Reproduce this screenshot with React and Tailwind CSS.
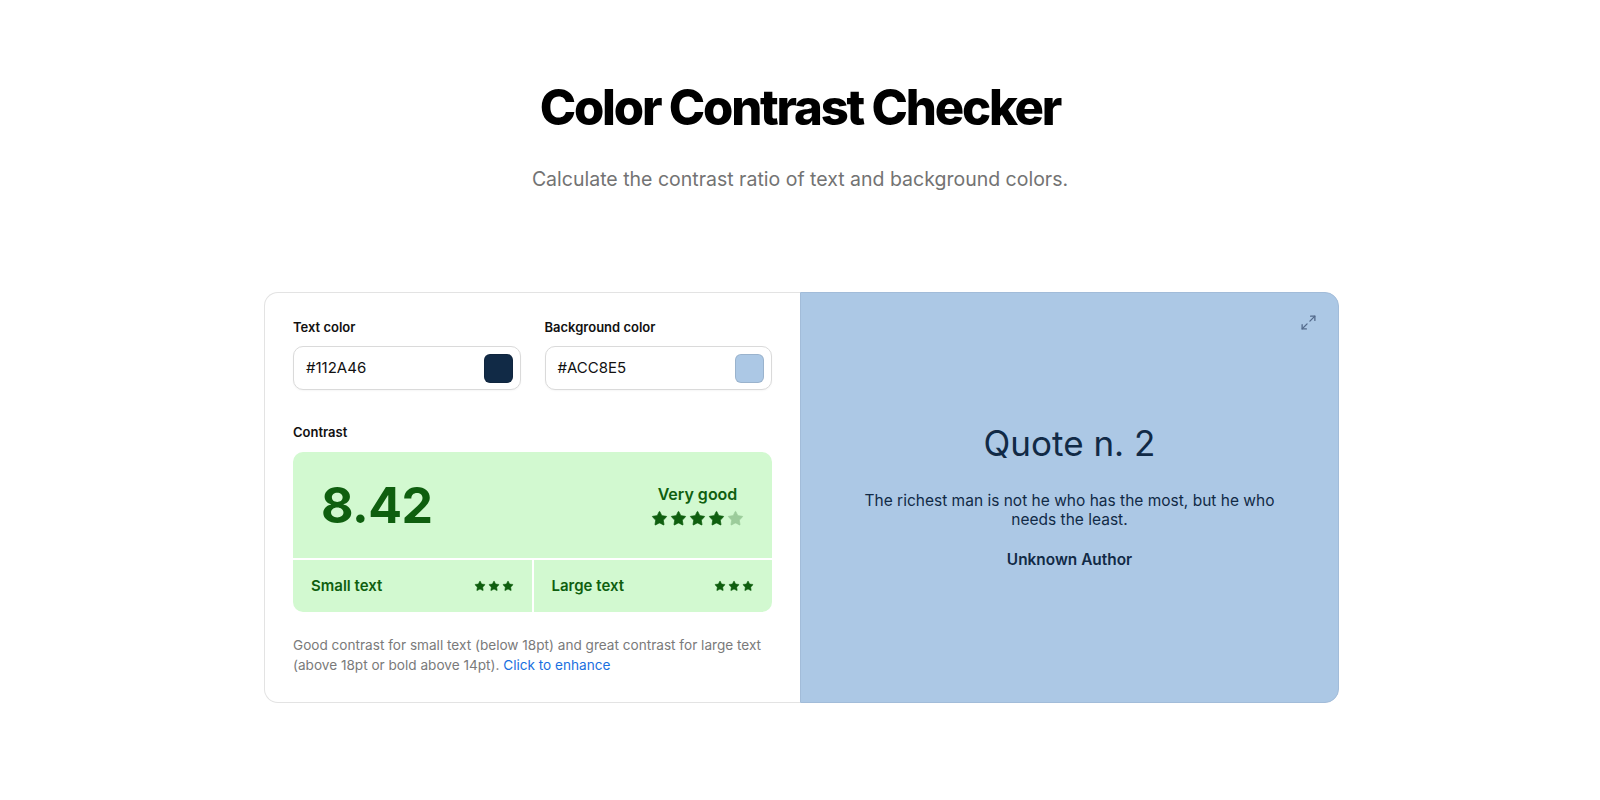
import React from 'react';
import { Star, Maximize2 } from 'lucide-react';

const GREEN = '#0f5f0f';

// row of filled stars, the rest faded
const Stars = ({ count, filled, size, gap }) => (
  <div className="flex items-center" style={{ gap }}>
    {Array.from({ length: count }).map((_, i) => (
      <Star
        key={i}
        size={size}
        strokeWidth={1}
        fill={i < filled ? GREEN : '#9ccc9b'}
        color={i < filled ? GREEN : '#9ccc9b'}
      />
    ))}
  </div>
);

const ColorField = ({ label, value, swatch }) => (
  <div>
    <div className="text-[13px] font-semibold text-[#111] leading-4 mb-[11px]">{label}</div>
    <div className="h-[44px] rounded-[10px] border border-[#dadada] bg-white flex items-center justify-between pl-[12px] pr-[7px] shadow-[0_1px_2px_rgba(0,0,0,0.04)]">
      <span className="text-[15px] text-[#111]">{value}</span>
      <span
        className="w-[29px] h-[29px] rounded-[6px] border border-black/10"
        style={{ backgroundColor: swatch }}
      />
    </div>
  </div>
);

export default function App() {
  return (
    <div className="min-h-screen bg-white font-['Inter',sans-serif] text-[#111] pt-[83px]">
      <h1 className="text-center text-[49px] leading-none font-extrabold tracking-[-0.045em] text-black">
        Color Contrast Checker
      </h1>
      <p className="text-center text-[19.5px] leading-7 text-[#737373] mt-[33px]">
        Calculate the contrast ratio of text and background colors.
      </p>

      <div className="flex justify-center pl-[3px] mt-[99px]">
        <div className="w-[1075px] grid grid-cols-[536px_1fr]">
          {/* controls */}
          <div className="border border-r-0 border-[#e3e3e3] rounded-l-[14px] px-7 pt-[26px] pb-[27px]">
            <div className="grid grid-cols-2 gap-6">
              <ColorField label="Text color" value="#112A46" swatch="#112A46" />
              <ColorField label="Background color" value="#ACC8E5" swatch="#ACC8E5" />
            </div>

            <div className="text-[13px] font-semibold leading-4 mt-[34px] mb-3">Contrast</div>
            <div className="rounded-[10px] overflow-hidden flex flex-col gap-[2px] bg-white">
              <div className="h-[106px] bg-[#d2f9d0] flex items-center justify-between px-7">
                <span className="text-[50px] font-bold leading-none tracking-[-0.01em] text-[#0f5f0f]">8.42</span>
                <div className="flex flex-col items-center gap-[6px]">
                  <span className="text-[16px] font-semibold text-[#0f5f0f] leading-5">Very good</span>
                  <Stars count={5} filled={4} size={17} gap={2} />
                </div>
              </div>
              <div className="grid grid-cols-2 gap-[2px]">
                <div className="h-[52px] bg-[#d2f9d0] flex items-center justify-between px-[18px]">
                  <span className="text-[15px] font-semibold text-[#0f5f0f]">Small text</span>
                  <Stars count={3} filled={3} size={12} gap={2} />
                </div>
                <div className="h-[52px] bg-[#d2f9d0] flex items-center justify-between px-[18px]">
                  <span className="text-[15px] font-semibold text-[#0f5f0f]">Large text</span>
                  <Stars count={3} filled={3} size={12} gap={2} />
                </div>
              </div>
            </div>

            <p className="mt-[23px] text-[13.6px] leading-5 text-[#7a7a7a]">
              Good contrast for small text (below 18pt) and great contrast for large text (above 18pt or bold above 14pt).{' '}
              <span className="text-[#1a6fe0]">Click to enhance</span>
            </p>
          </div>

          {/* preview */}
          <div className="relative bg-[#ACC8E5] border border-[#a2bcd9] rounded-r-[14px] flex items-center justify-center text-center text-[#112A46]">
            <Maximize2 size={17} strokeWidth={1.8} className="absolute top-[21px] right-[21px] text-[#52698a]" />
            <div className="flex flex-col items-center pb-[2px]">
              <h2 className="text-[35px] leading-[41px] font-normal">Quote n. 2</h2>
              <p className="mt-[28px] max-w-[440px] text-[15.5px] leading-[18.5px]">
                The richest man is not he who has the most, but he who needs the least.
              </p>
              <p className="mt-[21px] text-[15.4px] leading-5 font-semibold">Unknown Author</p>
            </div>
          </div>
        </div>
      </div>
    </div>
  );
}
